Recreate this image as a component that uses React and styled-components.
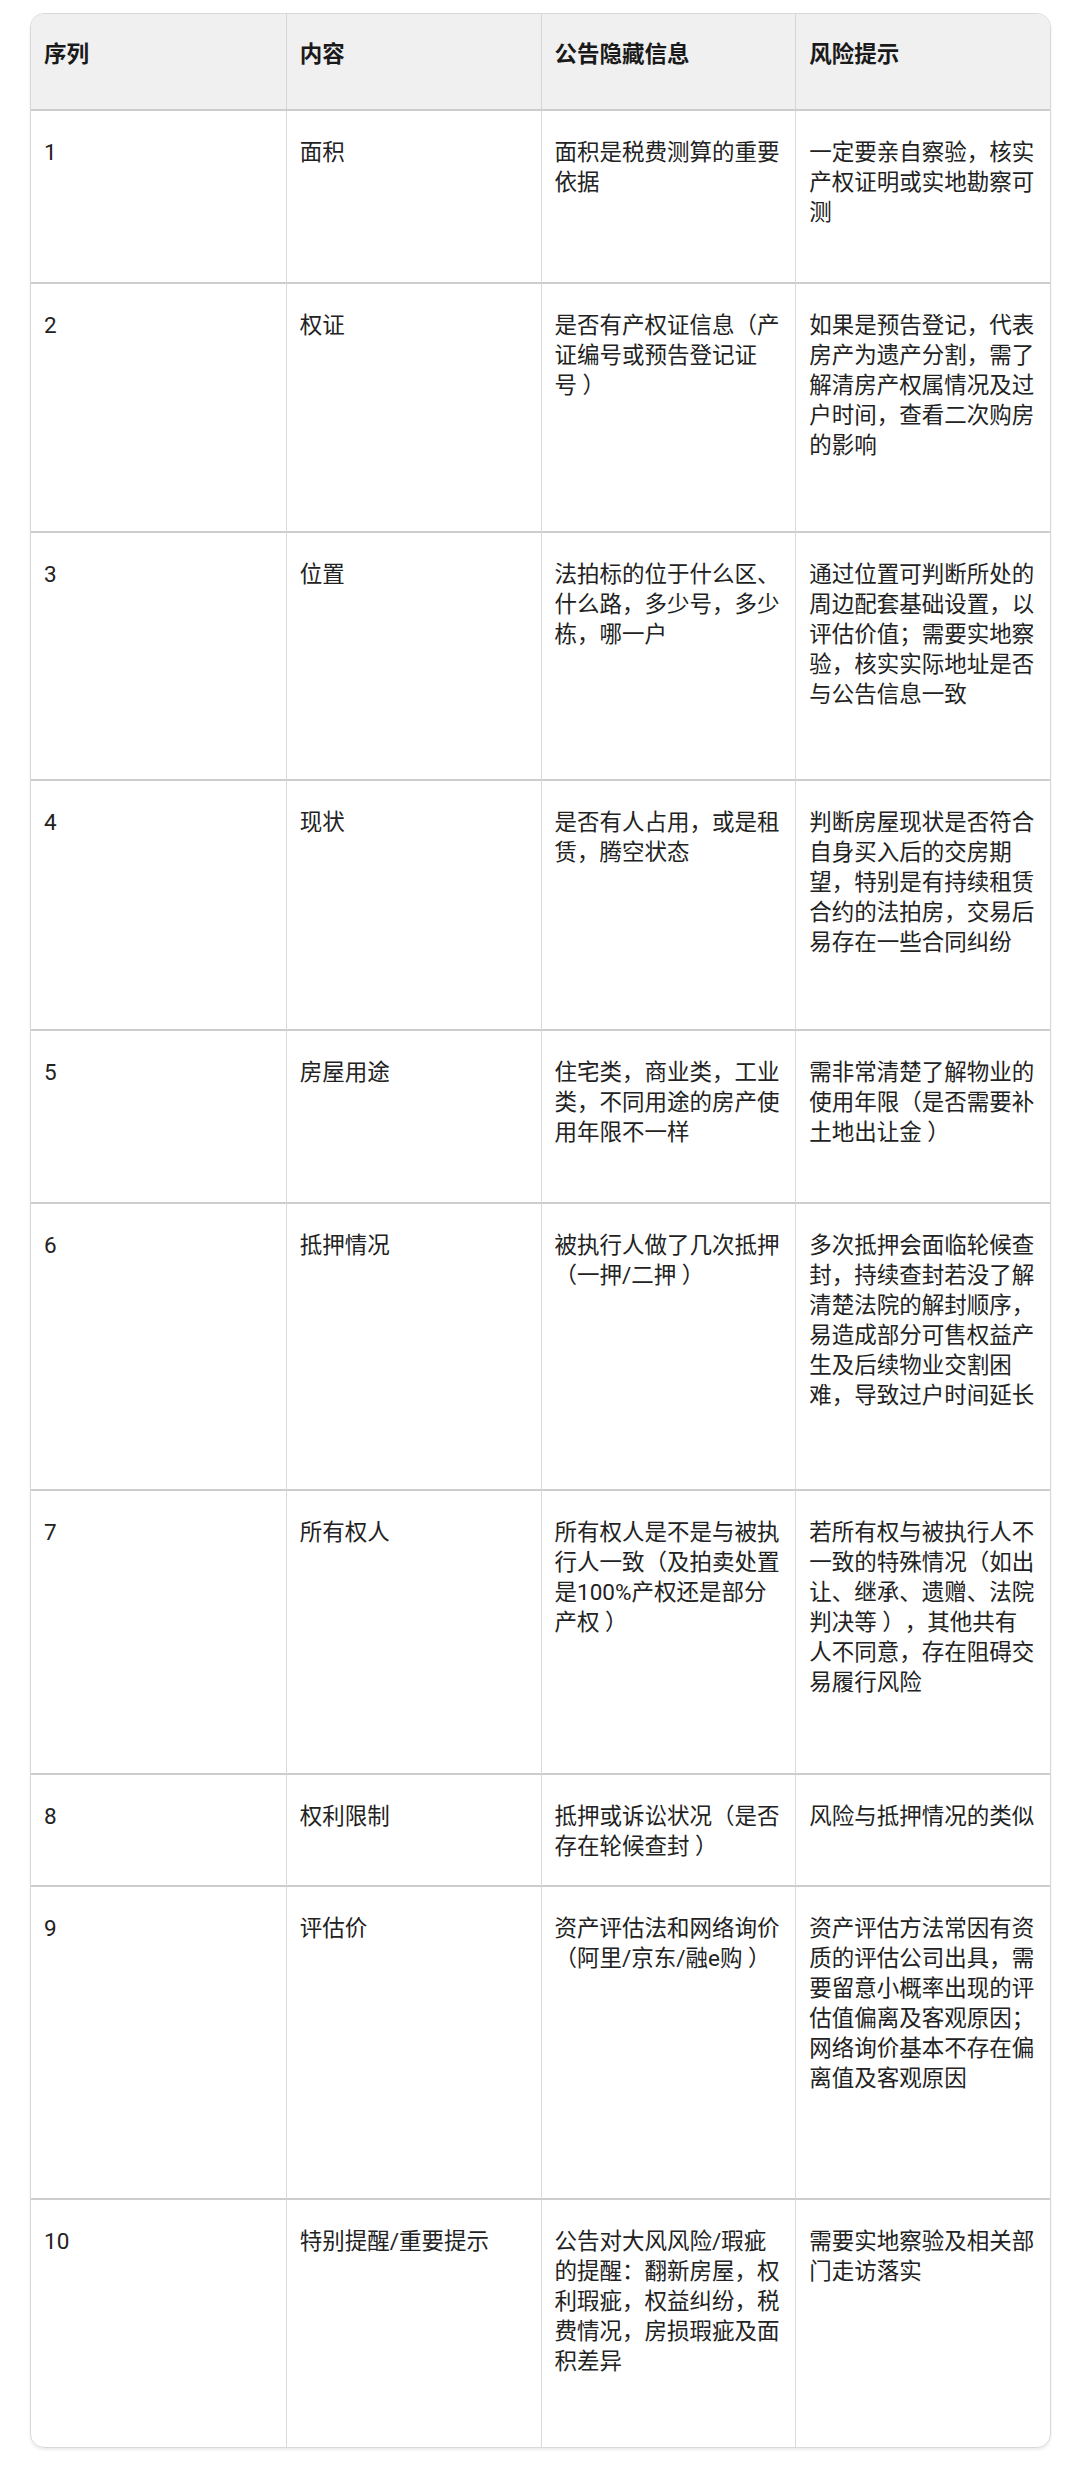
import styled, { createGlobalStyle } from "styled-components";

const GlobalStyle = createGlobalStyle`
  html, body {
    margin: 0;
    padding: 0;
    background: #ffffff;
  }
  body {
    font-family: Roboto, "Noto Sans CJK SC", sans-serif;
    color: #1f1f1f;
  }
`;

const Page = styled.div`
  padding: 13px 29px 20px 30px;
`;

const Card = styled.div`
  border: 1.5px solid #d9d9d9;
  border-radius: 14px;
  overflow: hidden;
  box-shadow: 0 2px 3px rgba(0, 0, 0, 0.08);
`;

const Table = styled.table`
  width: 100%;
  border-collapse: separate;
  border-spacing: 0;
  table-layout: fixed;
  font-size: 22.5px;
  line-height: 30px;
  text-spacing-trim: space-all;
`;

const HeadRow = styled.tr`
  height: 97px;
  background: #f0f0f0;
`;

const Row = styled.tr`
  height: ${(p) => p.$h}px;
`;

const Th = styled.th`
  text-align: left;
  vertical-align: top;
  font-weight: 700;
  color: #1a1a1a;
  padding: 25px 12px 0 13px;
  border-bottom: 2px solid #cdcdcd;
  & + & {
    border-left: 1px solid #d6d6d6;
  }
`;

const Td = styled.td`
  vertical-align: top;
  padding: 26px 12px 0 13px;
  color: #222222;
  border-bottom: ${(p) => (p.$last ? "none" : "2px solid #cdcdcd")};
  word-break: break-all;
  & + & {
    border-left: 1px solid #d9d9d9;
  }
`;

const headers = ["序列", "内容", "公告隐藏信息", "风险提示"];

// a no-break space sits before the closing brackets, as in the source text
const nb = "\u00a0";

const rows = [
  {
    h: 173,
    cells: ["1", "面积", "面积是税费测算的重要依据", "一定要亲自察验，核实产权证明或实地勘察可测"],
  },
  {
    h: 249,
    cells: [
      "2",
      "权证",
      `是否有产权证信息（产证编号或预告登记证号${nb}）`,
      "如果是预告登记，代表房产为遗产分割，需了解清房产权属情况及过户时间，查看二次购房的影响",
    ],
  },
  {
    h: 248,
    cells: [
      "3",
      "位置",
      "法拍标的位于什么区、什么路，多少号，多少栋，哪一户",
      "通过位置可判断所处的周边配套基础设置，以评估价值；需要实地察验，核实实际地址是否与公告信息一致",
    ],
  },
  {
    h: 250,
    cells: [
      "4",
      "现状",
      "是否有人占用，或是租赁，腾空状态",
      "判断房屋现状是否符合自身买入后的交房期望，特别是有持续租赁合约的法拍房，交易后易存在一些合同纠纷",
    ],
  },
  {
    h: 173,
    cells: [
      "5",
      "房屋用途",
      "住宅类，商业类，工业类，不同用途的房产使用年限不一样",
      `需非常清楚了解物业的使用年限（是否需要补土地出让金${nb}）`,
    ],
  },
  {
    h: 287,
    cells: [
      "6",
      "抵押情况",
      `被执行人做了几次抵押（一押/二押${nb}）`,
      "多次抵押会面临轮候查封，持续查封若没了解清楚法院的解封顺序，易造成部分可售权益产生及后续物业交割困难，导致过户时间延长",
    ],
  },
  {
    h: 284,
    cells: [
      "7",
      "所有权人",
      `所有权人是不是与被执行人一致（及拍卖处置是100%产权还是部分产权${nb}）`,
      `若所有权与被执行人不一致的特殊情况（如出让、继承、遗赠、法院判决等${nb}），其他共有人不同意，存在阻碍交易履行风险`,
    ],
  },
  {
    h: 112,
    cells: ["8", "权利限制", `抵押或诉讼状况（是否存在轮候查封${nb}）`, "风险与抵押情况的类似"],
  },
  {
    h: 313,
    cells: [
      "9",
      "评估价",
      `资产评估法和网络询价（阿里/京东/融e购${nb}）`,
      "资产评估方法常因有资质的评估公司出具，需要留意小概率出现的评估值偏离及客观原因；网络询价基本不存在偏离值及客观原因",
    ],
  },
  {
    h: 247,
    cells: [
      "10",
      "特别提醒/重要提示",
      "公告对大风风险/瑕疵的提醒：翻新房屋，权利瑕疵，权益纠纷，税费情况，房损瑕疵及面积差异",
      "需要实地察验及相关部门走访落实",
    ],
  },
];

export default function App() {
  return (
    <Page>
      <GlobalStyle />
      <Card>
        <Table>
          <thead>
            <HeadRow>
              {headers.map((h) => (
                <Th key={h}>{h}</Th>
              ))}
            </HeadRow>
          </thead>
          <tbody>
            {rows.map((row, i) => (
              <Row key={i} $h={row.h}>
                {row.cells.map((c, j) => (
                  <Td key={j} $last={i === rows.length - 1}>
                    {c}
                  </Td>
                ))}
              </Row>
            ))}
          </tbody>
        </Table>
      </Card>
    </Page>
  );
}
